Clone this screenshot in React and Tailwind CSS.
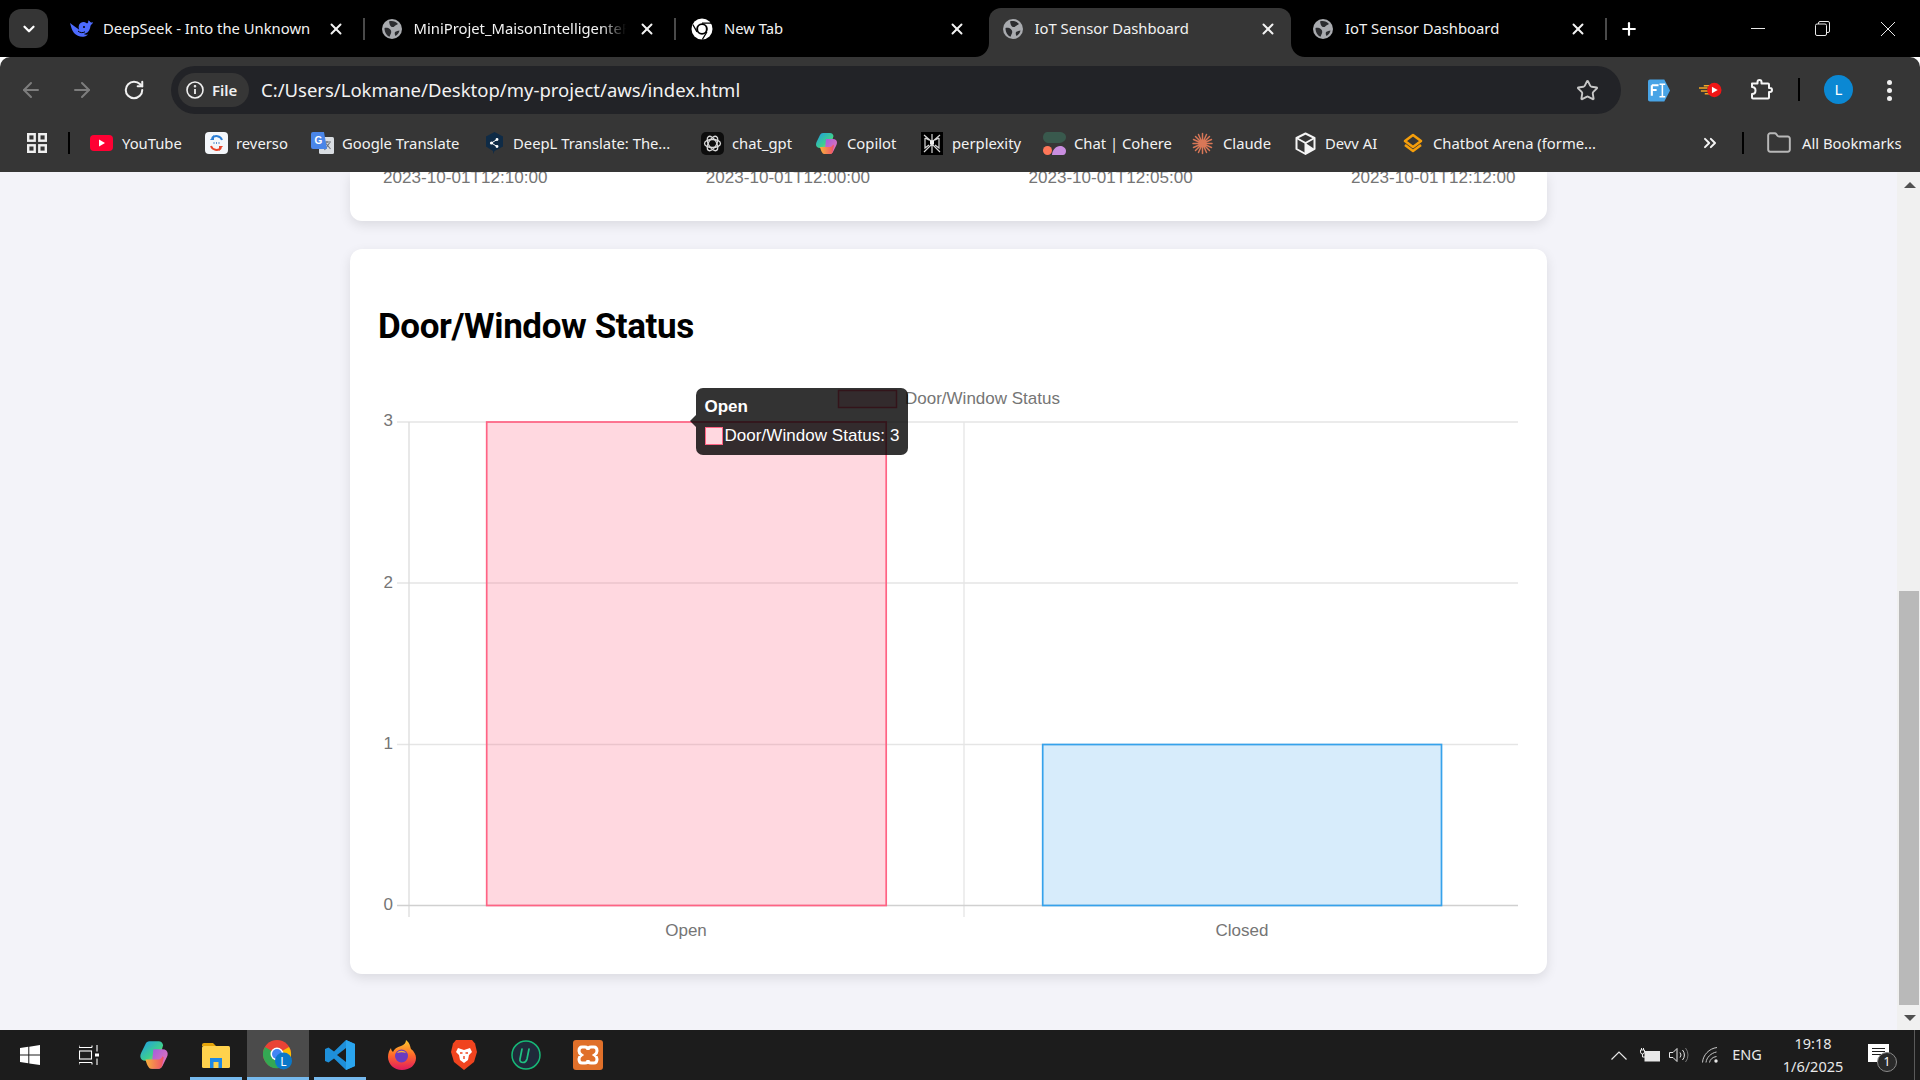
import React from "react";
import { ArrowLeft, ArrowRight, RotateCw, Star, X, Plus, ChevronDown, ChevronsRight, Folder } from "lucide-react";

const Globe = () => (
  <svg width="22" height="22" viewBox="0 0 22 22" className="shrink-0">
    <circle cx="11" cy="11" r="10" fill="#a9abaf" />
    <path d="M8 3.500c3-1 7 0 9 2.500-1 1-2.500 1.200-3.500 2.200-1 1.200-2.500 1-3.500.3-1.200-1-1.500-3-2-5zM3.500 10c2-.5 4 0 5.500 1.200 1.200 1 1.500 2.500 1 4-.4 1.200-1.200 2.300-1.500 3.500C5.500 17.700 3.500 14 3.500 10zM14 14c1.500-1 3-1.500 4.500-1.500-.5 2.500-2 4.500-4 5.500-.8-1.200-1-2.800-.5-4z" fill="#2b2c2f" />
  </svg>
);

const ChromeWhite = () => (
  <svg width="22" height="22" viewBox="0 0 22 22" className="shrink-0">
    <circle cx="11" cy="11" r="10.500" fill="#fff" />
    <circle cx="11" cy="11" r="5.800" fill="#000" />
    <circle cx="11" cy="11" r="3.900" fill="#fff" />
    <path d="M11 5.200h9M6 13.900 1.800 6.500M15.900 14 11.300 21.500" stroke="#000" strokeWidth="1.300" />
  </svg>
);

const Whale = () => (
  <svg width="24" height="18" viewBox="0 0 24 18" className="shrink-0 -ml-[1px]">
    <path d="M1 3c1 3 1.500 7 4 10 2.500 3 7 4.200 10.500 3.500 1.500-.3 2.500-1 3.300-2-1.500.3-3 .2-4-.5 3-.5 5.500-2.500 6.300-6 .3-1.300.3-2.500 1-3.300 1-.8 1.800-1.200 1.900-2.700-.8.800-1.800.700-2.400.300C21 1.500 20 .500 19 .500c.3 1 .5 2-.3 2.500-1 .7-1.700-.5-3-.8-2.500-.5-5.500 1-6 4-.2 1.300 0 2.500.5 3.500-2.500-1.700-5.500-4-9.200-6.700z" fill="#4d6bfe" />
    <circle cx="15" cy="7" r="1" fill="#000" />
    <path d="M9 11c2 1.800 4.500 2.200 7 .8" stroke="#000" strokeWidth="1" fill="none" />
  </svg>
);

function Tab({ icon, title, active, sep, fade }) {
  return (
    <div className="relative w-[310.5px] h-[57px] shrink-0">
      {active && (
        <>
          <div className="absolute left-0 top-2 bottom-0 w-[302px] bg-[#363636] rounded-t-[12px]" />
          <svg width="18" height="14" viewBox="0 0 18 14" className="absolute left-[-18px] bottom-0">
            <path d="M18 0A14 14 0 0 1 4 14H18Z" fill="#363636" />
          </svg>
          <svg width="18" height="14" viewBox="0 0 18 14" className="absolute left-[302px] bottom-0">
            <path d="M0 0A14 14 0 0 0 14 14H0Z" fill="#363636" />
          </svg>
        </>
      )}
      <div className="relative h-full flex items-center pl-[12px]">
        <div className="w-[24px] flex justify-center">{icon}</div>
        <div className={fade
          ? "ml-[10px] w-[212px] whitespace-nowrap overflow-hidden text-[14.8px] text-[#f2f2f2] [mask-image:linear-gradient(to_right,black_88%,transparent)]"
          : "ml-[10px] w-[212px] whitespace-nowrap overflow-hidden text-[14.8px] text-[#f2f2f2]"}>{title}</div>
        <div className="w-[22px] ml-[10px] flex justify-center">
          <X size={18} strokeWidth={2.6} color="#f2f2f2" />
        </div>
        <div className={sep ? "ml-[16px] w-[2px] h-[22px] bg-[#4a4a4a]" : "ml-[16px] w-[2px] h-[22px]"} />
      </div>
    </div>
  );
}

function TabStrip() {
  return (
    <div className="h-[57px] bg-black flex items-center shrink-0">
      <div className="ml-[9px] w-[39px] h-[39px] rounded-[12px] bg-[#353535] flex items-center justify-center shrink-0">
        <ChevronDown size={18} strokeWidth={3} color="#fff" />
      </div>
      <div className="ml-[9px] flex">
        <Tab icon={<Whale />} title="DeepSeek - Into the Unknown" sep />
        <Tab icon={<Globe />} title="MiniProjet_MaisonIntelligenteFinal" sep fade />
        <Tab icon={<ChromeWhite />} title="New Tab" />
        <Tab icon={<Globe />} title="IoT Sensor Dashboard" active />
        <Tab icon={<Globe />} title="IoT Sensor Dashboard" sep />
      </div>
      <div className="ml-[9px] w-[20px] flex justify-center">
        <Plus size={22} strokeWidth={2.6} color="#fff" />
      </div>
      <div className="ml-auto flex">
        <div className="w-[65px] h-[57px] flex items-center justify-center">
          <div className="w-[14px] h-[1px] bg-[#e8e8e8]" />
        </div>
        <div className="w-[65px] h-[57px] flex items-center justify-center">
          <svg width="15" height="15" viewBox="0 0 15 15" fill="none" stroke="#e8e8e8" strokeWidth="1">
            <rect x="0.500" y="3" width="11" height="11.500" rx="1.500" />
            <path d="M3.500 3V2a1.500 1.500 0 0 1 1.500-1.500h8A1.500 1.500 0 0 1 14.500 2v8a1.500 1.500 0 0 1-1.500 1.500h-1.500" />
          </svg>
        </div>
        <div className="w-[65px] h-[57px] flex items-center justify-center">
          <svg width="16" height="16" viewBox="0 0 16 16" stroke="#e8e8e8" strokeWidth="1"><path d="M1 1l14 14M15 1 1 15" /></svg>
        </div>
      </div>
    </div>
  );
}

function Toolbar() {
  return (
    <div className="h-[57px] bg-[#363636] rounded-t-[10px] flex items-start pt-[9px] shrink-0">
      <div className="w-[48px] ml-[7px] h-[48px] flex items-center justify-center">
        <ArrowLeft size={24} strokeWidth={2} color="#7d7d7d" />
      </div>
      <div className="w-[54px] h-[48px] flex items-center justify-center">
        <ArrowRight size={24} strokeWidth={2} color="#7d7d7d" />
      </div>
      <div className="w-[50px] h-[48px] flex items-center justify-center">
        <RotateCw size={22} strokeWidth={2.2} color="#f0f0f0" />
      </div>
      <div className="ml-[12px] w-[1450px] h-[48px] rounded-full bg-[#222327] flex items-center pl-[7px] pr-[22px]">
        <div className="w-[71px] h-[34px] rounded-full bg-[#363636] flex items-center pl-[8px] shrink-0">
          <svg width="18" height="18" viewBox="0 0 18 18" fill="none" stroke="#f0f0f0" strokeWidth="1.600" className="shrink-0">
            <circle cx="9" cy="9" r="8" />
            <path d="M9 8v5" strokeWidth="1.800" />
            <circle cx="9" cy="5.300" r="0.500" />
          </svg>
          <span className="ml-[8px] text-[15px] font-semibold text-[#f0f0f0]">File</span>
        </div>
        <div className="ml-[12px] text-[18.500px] text-[#f2f2f2] whitespace-nowrap">C:/Users/Lokmane/Desktop/my-project/aws/index.html</div>
        <div className="ml-auto">
          <Star size={23} strokeWidth={2} color="#c7c7c7" />
        </div>
      </div>
      <div className="ml-[27px] w-[23px] h-[48px] flex items-center">
        <svg width="24" height="23" viewBox="0 0 24 23">
          <path d="M2 0h15l6 11.500-6 11.500H2a2 2 0 0 1-2-2V2a2 2 0 0 1 2-2z" fill="#48a4e6" />
          <path d="M4 6h7M4 6v11M4 11h5" stroke="#fff" strokeWidth="2.200" fill="none" />
          <path d="M12 5h6M15 5v13M12 18h6" stroke="#fff" strokeWidth="1.600" fill="none" />
        </svg>
      </div>
      <div className="ml-[28px] w-[23px] h-[48px] flex items-center">
        <svg width="24" height="16" viewBox="0 0 24 16">
          <path d="M0 6h9M2 9h8M6 12h6M5 3.500h8" stroke="#f5a623" strokeWidth="1.600" />
          <circle cx="16" cy="8" r="7.500" fill="#f01616" />
          <path d="M13.500 4.500v7l6-3.500z" fill="#fff" />
        </svg>
      </div>
      <div className="ml-[27px] w-[26px] h-[48px] flex items-center">
        <svg width="24" height="24" viewBox="0 0 24 24" fill="none" stroke="#f5f5f5" strokeWidth="2" strokeLinejoin="round">
          <path d="M3 5.500h5.500V4a2 2 0 0 1 4 0v1.500H19a1 1 0 0 1 1 1V10h1a2 2 0 0 1 0 4h-1v5.500a1 1 0 0 1-1 1H4a1 1 0 0 1-1-1V16c2 0 3.500-1.500 3.500-3.500S5 9 3 9z" />
        </svg>
      </div>
      <div className="ml-[23px] mt-[12px] w-[2px] h-[23px] bg-black" />
      <div className="ml-[24px] mt-[9px] w-[29px] h-[29px] rounded-full bg-[#0b88d3] flex items-center justify-center text-[15px] text-white">L</div>
      <div className="ml-[34px] w-[5px] h-[48px] flex flex-col items-center justify-center gap-[3px]">
        <div className="w-[5px] h-[5px] rounded-full bg-[#f0f0f0]" />
        <div className="w-[5px] h-[5px] rounded-full bg-[#f0f0f0]" />
        <div className="w-[5px] h-[5px] rounded-full bg-[#f0f0f0]" />
      </div>
    </div>
  );
}

const OpenAI = () => (
  <svg width="23" height="23" viewBox="0 0 23 23">
    <rect width="23" height="23" rx="5" fill="#0d0d0d" />
    <g fill="none" stroke="#d8d8d8" strokeWidth="1.300">
      <ellipse cx="11.500" cy="11.500" rx="8" ry="4" />
      <ellipse cx="11.500" cy="11.500" rx="8" ry="4" transform="rotate(60 11.500 11.500)" />
      <ellipse cx="11.500" cy="11.500" rx="8" ry="4" transform="rotate(120 11.500 11.500)" />
    </g>
  </svg>
);

const Copilot = ({ size = 23 }) => (
  <svg width={size} height={size} viewBox="0 0 23 23">
    <defs>
      <linearGradient id="cpA" x1="0" y1="0" x2="1" y2="1"><stop offset="0" stopColor="#1e9be8" /><stop offset="0.600" stopColor="#3ecf8e" /><stop offset="1" stopColor="#f5d33c" /></linearGradient>
      <linearGradient id="cpB" x1="0" y1="0" x2="1" y2="1"><stop offset="0" stopColor="#a05be0" /><stop offset="1" stopColor="#f07ab0" /></linearGradient>
      <linearGradient id="cpC" x1="0" y1="0" x2="1" y2="0"><stop offset="0" stopColor="#f7b23b" /><stop offset="1" stopColor="#ef4f6b" /></linearGradient>
    </defs>
    <path d="M8 1h7c2 0 3 1 3.500 3L15 16H5c-2.500 0-4-1.500-4-3.500 0-1 .3-2 .8-3L5 3c.6-1.300 1.600-2 3-2z" fill="url(#cpA)" />
    <path d="M11 7h7c2.500 0 4 1.500 4 3.500 0 1-.3 2-.8 3l-3 6c-.7 1.500-1.800 2.500-3.200 2.500H9.500z" fill="url(#cpB)" />
    <path d="M5 15h10c1.500 0 2.500-1 3-2.500l1 1-1.500 7c-.5 1-1.500 1.500-2.500 1.500H9C7.500 22 6 19 5 15z" fill="url(#cpC)" />
  </svg>
);

function BM({ w, icon, label, gap = "ml-[9px]" }) {
  return (
    <div className={`flex items-center shrink-0 ${w}`}>
      <div className="shrink-0 flex items-center">{icon}</div>
      <span className={`${gap} text-[14.8px] text-[#f2f2f2] whitespace-nowrap`}>{label}</span>
    </div>
  );
}

function Bookmarks() {
  return (
    <div className="h-[58px] bg-[#363636] flex items-center shrink-0">
      <svg width="20" height="20" viewBox="0 0 20 20" fill="none" stroke="#f0f0f0" strokeWidth="2.400" className="ml-[27px] shrink-0">
        <rect x="1.200" y="1.200" width="6.500" height="6.500" />
        <rect x="12.300" y="1.200" width="6.500" height="6.500" />
        <rect x="1.200" y="12.300" width="6.500" height="6.500" />
        <rect x="12.300" y="12.300" width="6.500" height="6.500" />
      </svg>
      <div className="ml-[21px] w-[2px] h-[22px] bg-black shrink-0" />
      <div className="ml-[20px] flex items-center">
        <div className="w-[115px] flex items-center shrink-0">
          <svg width="23" height="16" viewBox="0 0 23 16" className="shrink-0">
            <rect width="23" height="16" rx="4" fill="#ff0033" />
            <path d="M9 4.500v7l6-3.500z" fill="#fff" />
          </svg>
          <span className="ml-[9px] text-[14.8px] text-[#f2f2f2] whitespace-nowrap">YouTube</span>
        </div>
        <BM w="w-[106px]" label="reverso" gap="ml-[8px]" icon={
          <svg width="23" height="22" viewBox="0 0 23 22">
            <rect width="23" height="22" rx="4" fill="#f4f7fb" />
            <path d="M17 8a6 6 0 0 0-10-2" fill="none" stroke="#2c7fd6" strokeWidth="2" />
            <path d="M6 14a6 6 0 0 0 10 2" fill="none" stroke="#e8452c" strokeWidth="2" />
            <path d="M9 3v5H5" fill="#2c7fd6" />
            <path d="M14 19v-5h4" fill="#e8452c" />
            <path d="M8.500 11h1M11 11h1M13.500 11h1" stroke="#2c6fc0" strokeWidth="1.400" />
          </svg>
        } />
        <BM w="w-[173px]" label="Google Translate" gap="ml-[8px]" icon={
          <svg width="23" height="22" viewBox="0 0 23 22">
            <rect x="8" y="5" width="15" height="17" rx="1.500" fill="#d9dde2" />
            <path d="M12 10h8M16 9v2M13.500 18l5-7M14.500 11l5 6" stroke="#6b7078" strokeWidth="1.100" />
            <path d="M2 0h11l3 17H2a2 2 0 0 1-2-2V2a2 2 0 0 1 2-2z" fill="#4a86e8" />
            <text x="3.500" y="11.500" fontSize="10" fontWeight="700" fill="#fff" fontFamily="'Liberation Sans',sans-serif">G</text>
          </svg>
        } />
        <BM w="w-[217px]" label="DeepL Translate: The..." icon={
          <div className="w-[20px] flex justify-center">
            <svg width="19" height="22" viewBox="0 0 19 22">
              <path d="M9.500 0 18 4.500v10L9.500 19 8 22v-3l-7-4.500v-10z" fill="#0f2b46" />
              <circle cx="6.500" cy="11" r="1.600" fill="#fff" />
              <circle cx="12" cy="7.500" r="1.400" fill="#fff" />
              <circle cx="12" cy="14.500" r="1.400" fill="#fff" />
              <path d="M6.500 11 12 7.500M6.500 11 12 14.500" stroke="#fff" strokeWidth="1" />
            </svg>
          </div>
        } />
        <BM w="w-[114px]" label="chat_gpt" gap="ml-[8px]" icon={<OpenAI />} />
        <BM w="w-[106px]" label="Copilot" icon={<Copilot />} />
        <BM w="w-[122px]" label="perplexity" icon={
          <svg width="22" height="23" viewBox="0 0 22 23">
            <rect width="22" height="23" fill="#000" />
            <g fill="none" stroke="#d8d8d8" strokeWidth="1.200">
              <path d="M11 2v19M3 3l8 7 8-7M3 20l8-8 8 8M4 6v10l4-3M18 6v10l-4-3M8 8l-4-2M14 8l4-2" />
            </g>
            <rect x="9" y="8.500" width="4" height="4" fill="#eee" />
          </svg>
        } />
        <BM w="w-[149px]" label="Chat | Cohere" gap="ml-[8px]" icon={
          <svg width="23" height="23" viewBox="0 0 23 23">
            <path d="M5 0h11c4 0 7 2 7 5 0 4-4 6-8 6H6c-3 0-6-2-6-5.500C0 2 2 0 5 0z" fill="#39594d" />
            <circle cx="4.500" cy="18.500" r="4.500" fill="#ff7759" />
            <path d="M9 23c0-5 4-9 8-9 3 0 6 2 6 5 0 2-1 4-3 4z" fill="#c98ee0" />
          </svg>
        } />
        <BM w="w-[103px]" label="Claude" gap="ml-[10px]" icon={
          <svg width="21" height="23" viewBox="0 0 21 23" stroke="#d97757" strokeWidth="1.500" strokeLinecap="round">
            <path d="M10.500 1.500v20M1 11.500h19M3.500 4.500l14 14M17.500 4.500l-14 14M6.500 2.500l8 18M14.500 2.500l-8 18M1.500 7.500l18 8M19.500 7.500l-18 8" />
            <circle cx="10.500" cy="11.500" r="3" fill="#d97757" stroke="none" />
          </svg>
        } />
        <BM w="w-[108px]" label="Devv AI" icon={
          <svg width="21" height="23" viewBox="0 0 21 23" fill="none" stroke="#f5f5f5" strokeWidth="2" strokeLinejoin="round">
            <path d="M10.500 1.500 19.500 6v11l-9 5-9-5V6z" />
            <path d="m1.500 6 9 5 9-5M10.500 11v11" />
            <path d="M10.500 11l9 6-9 5z" fill="#f5f5f5" stroke="none" />
          </svg>
        } />
        <BM w="w-[295px]" label="Chatbot Arena (forme..." gap="ml-[10px]" icon={
          <svg width="20" height="20" viewBox="0 0 20 20" fill="none" stroke="#f59e0b" strokeWidth="2.600" strokeLinejoin="round">
            <path d="M10 2 18 8l-8 6-8-6z" />
            <path d="M2 12l8 6 8-6" />
          </svg>
        } />
        <div className="w-[33px] flex justify-center -ml-[5px] shrink-0">
          <ChevronsRight size={20} strokeWidth={2.4} color="#f5f5f5" />
        </div>
        <div className="ml-[16px] w-[2px] h-[22px] bg-black shrink-0" />
        <Folder size={26} strokeWidth={1.800} color="#b8b8b8" className="ml-[22px] shrink-0" />
        <span className="ml-[10px] text-[14.8px] text-[#f2f2f2] whitespace-nowrap">All Bookmarks</span>
      </div>
    </div>
  );
}

function Chart() {
  const tx = { fontFamily: "'Liberation Sans', Arial, sans-serif", fontSize: 17, fill: "#757575" };
  return (
    <div className="relative w-[1141px] h-[575px]">
      <svg width="1141" height="575" viewBox="378 385 1141 575" className="block">
        <rect x="838.500" y="390.500" width="58" height="17" fill="rgba(255,99,132,0.25)" stroke="rgb(255,99,132)" strokeWidth="1.500" />
        <text x="905" y="404" {...tx}>Door/Window Status</text>

        <g stroke="#e5e5e5" strokeWidth="1.300">
          <path d="M397 422H1518M397 583H1518M397 744.500H1518" />
          <path d="M964 422V917" />
        </g>
        <path d="M409 422V917" stroke="#dcdcdc" strokeWidth="1.300" />
        <path d="M397 905.500H1518" stroke="#d0d0d0" strokeWidth="1.300" />

        <rect x="486.700" y="422" width="399.500" height="483.500" fill="rgba(255,99,132,0.25)" stroke="rgb(255,99,132)" strokeWidth="1.700" />
        <rect x="1042.700" y="744.500" width="398.800" height="161" fill="rgba(54,162,235,0.2)" stroke="rgb(54,162,235)" strokeWidth="1.700" />

        <text x="393" y="426" textAnchor="end" {...tx}>3</text>
        <text x="393" y="588" textAnchor="end" {...tx}>2</text>
        <text x="393" y="749" textAnchor="end" {...tx}>1</text>
        <text x="393" y="910" textAnchor="end" {...tx}>0</text>
        <text x="686" y="936" textAnchor="middle" {...tx}>Open</text>
        <text x="1242" y="936" textAnchor="middle" {...tx}>Closed</text>
      </svg>
      <div className="absolute left-[318px] top-[3px] w-[212px] h-[67px] rounded-[7px] bg-black/80 font-['Liberation_Sans',Arial,sans-serif] text-[17px] leading-[20px] text-white">
        <div className="absolute left-[-6px] top-[27px] w-0 h-0 border-y-[6px] border-y-transparent border-r-[6px] border-r-black/80" />
        <div className="pl-[8.500px] pt-[9px] font-bold">Open</div>
        <div className="pl-[8.500px] pt-[9px] flex items-center">
          <div className="w-[18px] h-[18px] bg-[#ffd8e0] border-[1.500px] border-[#ff6384] shrink-0" />
          <span className="ml-[2px] tracking-[0.05px] whitespace-nowrap">Door/Window Status: 3</span>
        </div>
      </div>
    </div>
  );
}

function Page() {
  return (
    <div className="flex-1 bg-[#f3f3f9] overflow-hidden pl-[350px] pr-[350.500px]">
      <div className="h-[49px] bg-white rounded-b-[12px] shadow-[0_4px_12px_rgba(0,0,0,0.1)] overflow-hidden pl-[33px] pr-[31px] flex justify-between font-['Liberation_Sans',Arial,sans-serif] text-[17.1px] leading-[20px] text-[#757575]">
        {["2023-10-01T12:10:00", "2023-10-01T12:00:00", "2023-10-01T12:05:00", "2023-10-01T12:12:00"].map((t, i) => (
          <div key={i} className="-mt-[4px] h-[20px] whitespace-nowrap">{t}</div>
        ))}
      </div>
      <div className="mt-[28px] h-[725px] bg-white rounded-[12px] shadow-[0_4px_12px_rgba(0,0,0,0.1)] px-[28px] pt-[57px]">
        <h2 className="font-['Roboto',sans-serif] font-bold text-[35px] leading-[42px] tracking-[-0.400px] text-black">Door/Window Status</h2>
        <div className="mt-[37px]"><Chart /></div>
      </div>
    </div>
  );
}

function Scrollbar() {
  return (
    <div className="w-[23px] bg-[#f0f0f0] flex flex-col shrink-0">
      <div className="h-[26px] flex items-center justify-center pl-[2px]">
        <div className="w-0 h-0 border-x-[6px] border-x-transparent border-b-[6px] border-b-[#505050]" />
      </div>
      <div className="flex-1" />
      <div className="h-[414px] w-[20px] ml-[2px] bg-[#b9b9b9]" />
      <div className="h-[25px] flex items-center justify-center pl-[2px]">
        <div className="w-0 h-0 border-x-[6px] border-x-transparent border-t-[6px] border-t-[#505050]" />
      </div>
    </div>
  );
}

function Slot({ children, active, line }) {
  return (
    <div className={active
      ? "relative w-[62px] h-[50px] flex items-center justify-center bg-[#4b4b4b] shrink-0"
      : "relative w-[62px] h-[50px] flex items-center justify-center shrink-0"}>
      {children}
      {line && <div className={active ? "absolute bottom-0 left-0 right-0 h-[3px] bg-[#76b9ed]" : "absolute bottom-0 left-[5px] right-[5px] h-[3px] bg-[#76b9ed]"} />}
    </div>
  );
}

function Taskbar() {
  return (
    <div className="h-[50px] bg-[#1c1c1c] flex items-center shrink-0 font-['Noto_Sans',sans-serif] text-[#e8e8e8]">
      <div className="w-[60px] flex justify-center">
        <svg width="20" height="20" viewBox="0 0 20 20" fill="#fff"><path d="M0 3l8.300-1.200V9.600H0zM9.300 1.700 20 0v9.600H9.300zM0 10.500h8.300v7.800L0 17zM9.300 10.500H20V20L9.300 18.400z" /></svg>
      </div>
      <div className="w-[58px] flex justify-center">
        <svg width="20" height="20" viewBox="0 0 20 20" fill="none" stroke="#fff" strokeWidth="1.100">
          <path d="M0 2.500h13M0 17.500h13M0 .5v2M13 .5v2M0 17.500v2M13 17.500v2" />
          <rect x="0.500" y="6" width="12" height="8" />
          <path d="M18 0v6.500M18 13.500V20" />
          <rect x="16" y="8.500" width="4" height="3" fill="#fff" stroke="none" />
        </svg>
      </div>
      <div className="ml-[5px] flex">
        <Slot><Copilot size={30} /></Slot>
        <Slot line>
          <svg width="28" height="26" viewBox="0 0 28 26">
            <path d="M0 3a2 2 0 0 1 2-2h9l3 3H0z" fill="#e5a50a" />
            <rect y="4" width="28" height="22" rx="1.500" fill="#ffd24d" />
            <path d="M8 26v-10h12v10h-3.500v-6h-5v6z" fill="#1e88e5" />
          </svg>
        </Slot>
        <Slot active line>
          <svg width="30" height="30" viewBox="0 0 30 30">
            <circle cx="14" cy="14" r="14" fill="#ea4335" />
            <path d="M14 14 26 7a14 14 0 0 1-6 20z" fill="#fbbc05" />
            <path d="M14 14 2 7a14 14 0 0 0 14 21z" fill="#34a853" />
            <circle cx="14" cy="14" r="6.500" fill="#fff" />
            <circle cx="14" cy="14" r="5" fill="#4285f4" />
            <circle cx="20.500" cy="21" r="8.500" fill="#0b78c9" />
            <text x="20.500" y="25.500" fontSize="12" textAnchor="middle" fill="#fff" fontFamily="'Noto Sans',sans-serif">L</text>
          </svg>
        </Slot>
        <Slot line>
          <svg width="30" height="30" viewBox="0 0 30 30">
            <path d="M21 0 30 4v22l-9 4-12-11.500-5.500 4L0 21V9l3.500-1.500L9 11.500z" fill="#1e8fd9" />
            <path d="M21 8 12 15l9 7z" fill="#1c1c1c" />
            <path d="M21 0 30 4v22l-9 4z" fill="#2aa5ef" />
          </svg>
        </Slot>
        <Slot>
          <svg width="30" height="30" viewBox="0 0 30 30">
            <defs>
              <linearGradient id="ff" x1="0" y1="0" x2="0" y2="1"><stop offset="0" stopColor="#ffcb2d" /><stop offset="0.500" stopColor="#ff6a2a" /><stop offset="1" stopColor="#e0195f" /></linearGradient>
            </defs>
            <path d="M15 30C7 30 1 24 1 17c0-4 1.500-7 3-9 0 2 1 3 2 4 1-3 4-5 8-6 3-1 5-3 5-6 4 3 4 6 5 9 3 2 5 6 5 9 0 7-6 12-14 12z" fill="url(#ff)" />
            <circle cx="14.500" cy="16" r="6.500" fill="#6a3bc0" />
            <path d="M10 13c2-3 7-3 9 0-3-1-6-1-9 0z" fill="#ffb03a" />
          </svg>
        </Slot>
        <Slot>
          <svg width="26" height="30" viewBox="0 0 26 30">
            <path d="M5 0h16l3 3.500L26 12l-3 10-10 8-10-8-3-10 2-8.500z" fill="#f0441f" />
            <path d="M7 8l6 2 6-2 2 4-3 3-1 5-4 3-4-3-1-5-3-3z" fill="#fff" />
            <path d="M9 13h2.500M14.500 13H17M13 16v3" stroke="#f0441f" strokeWidth="1.400" />
          </svg>
        </Slot>
        <Slot>
          <svg width="30" height="30" viewBox="0 0 30 30">
            <circle cx="15" cy="15" r="14" fill="#1f2a3a" stroke="#17b877" strokeWidth="1.500" />
            <path d="M11 9l-2 10c-.5 2.500 1 3.500 3 3.500 2.500 0 3.500-1.500 4-3.500l2-10" fill="none" stroke="#1fc282" strokeWidth="1.700" strokeLinecap="round" />
          </svg>
        </Slot>
        <Slot>
          <svg width="30" height="30" viewBox="0 0 30 30">
            <rect width="30" height="30" rx="3" fill="#e0702a" />
            <path d="M9 7h3c2 0 3 1.500 3 3 0-1.500 1-3 3-3h3c2 0 3 2 3 4s-1 3-2.500 4c1.500 1 2.500 2 2.500 4s-1 4-3 4h-3c-2 0-3-1.500-3-3 0 1.500-1 3-3 3H9c-2 0-3-2-3-4s1-3 2.500-4C7 14 6 13 6 11s1-4 3-4z" fill="none" stroke="#fff" strokeWidth="3" />
          </svg>
        </Slot>
      </div>
      <div className="ml-auto flex items-center">
        <svg width="16" height="9" viewBox="0 0 16 9" fill="none" stroke="#e8e8e8" strokeWidth="1.200"><path d="M.5 8.500 8 1l7.500 7.500" /></svg>
        <svg width="20" height="14" viewBox="0 0 20 14" fill="none" className="ml-[13px]">
          <rect x="5" y="3.500" width="14.500" height="9.500" fill="#e8e8e8" stroke="#e8e8e8" />
          <path d="M1.500 0v2M3.500 0v2M.5 2h4v2a2 2 0 0 1-4 0zM2.500 6v3h3" stroke="#e8e8e8" strokeWidth="1" />
        </svg>
        <svg width="20" height="16" viewBox="0 0 20 16" fill="none" stroke="#e8e8e8" strokeWidth="1" className="ml-[9px]">
          <path d="M.5 5.500h3.500L8 1.500v13l-4-4H.5z" />
          <path d="M11 5.500a4 4 0 0 1 0 5M13.500 3a7.500 7.500 0 0 1 0 10" />
          <path d="M16.500 1a11 11 0 0 1 0 14" stroke="#777" />
        </svg>
        <svg width="17" height="16" viewBox="0 0 17 16" fill="none" stroke="#c8c8c8" strokeWidth="1" className="ml-[13px]">
          <path d="M.5 15.500C1 8 7 1.500 15 .5M4 15.500c.5-5 5-9.500 10.500-10.500M7.500 15.500c.5-3 3-5.500 7-6" />
          <circle cx="14" cy="14" r="1.700" fill="#e8e8e8" stroke="none" />
        </svg>
        <span className="ml-[9px] w-[38px] text-[14.500px] text-center">ENG</span>
        <div className="ml-[12px] w-[70px] flex flex-col items-center text-[14.500px] leading-[23px]">
          <span>19:18</span>
          <span>1/6/2025</span>
        </div>
        <div className="relative ml-[20px] w-[21px] h-[18px] -mt-[4px] bg-white">
          <div className="mt-[4px] mx-[4px] h-[1px] bg-[#1c1c1c]" />
          <div className="mt-[2px] mx-[4px] h-[1px] bg-[#1c1c1c]" />
          <div className="mt-[2px] mx-[4px] h-[1px] bg-[#1c1c1c]" />
          <div className="absolute left-[9px] top-[8px] w-[20px] h-[20px] rounded-full bg-[#2a2a2a] border border-[#8a8a8a] flex items-center justify-center text-[12px] text-white">1</div>
        </div>
        <div className="ml-[25px] w-[1px] h-[50px] bg-[#5a5a5a]" />
        <div className="w-[5px]" />
      </div>
    </div>
  );
}

export default function App() {
  return (
    <div className="w-[1920px] h-[1080px] overflow-hidden flex flex-col font-['Noto_Sans',sans-serif]">
      <TabStrip />
      <Toolbar />
      <Bookmarks />
      <div className="flex-1 flex min-h-0">
        <Page />
        <Scrollbar />
      </div>
      <Taskbar />
    </div>
  );
}
